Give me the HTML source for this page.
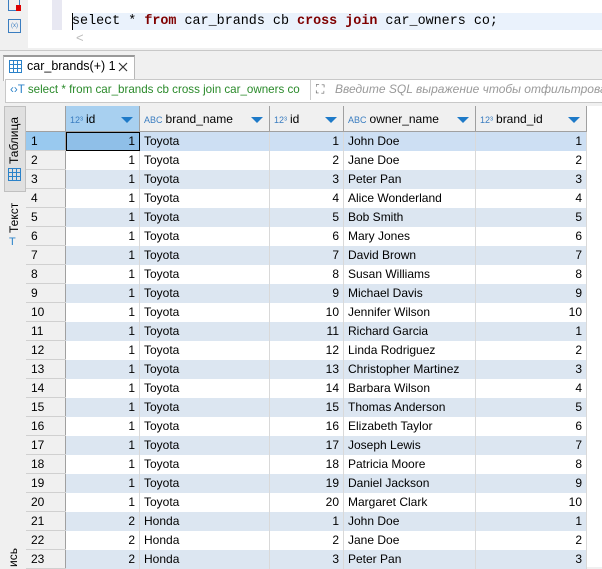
<!DOCTYPE html><html><head><meta charset="utf-8"><style>
body{margin:0;width:602px;height:567px;overflow:hidden;background:#f0f0f0;font-family:"Liberation Sans",sans-serif;position:relative}
.a{position:absolute}
.sql{font-family:"Liberation Mono",monospace;font-size:13.4px}
.kw{color:#7f0000;font-weight:bold}
table{border-collapse:collapse;font-size:12px}
td{height:18px;padding:0 4px;border-right:1px solid #d9d9d9;white-space:nowrap}
tr.o td{background:#dce6f1}
tr.e td{background:#fff}
td.n{background:#f0f0f0!important;border-bottom:1px solid #d0d0d0;border-right:1px solid #a0a0a0;padding-left:5px}
td.r{text-align:right}
th{height:25px;background:#f0f0f0;border-right:1px solid #a0a0a0;border-bottom:1px solid #a0a0a0;font-weight:normal;text-align:left;padding:0 4px;font-size:12px;position:relative}
.tri{position:absolute;right:6px;top:11px;width:0;height:0;border-left:6px solid transparent;border-right:6px solid transparent;border-top:6px solid #1e7ac8}
.ic{font-size:9px;color:#3a7dc0;margin-right:3px}
.grid{position:absolute;width:11px;height:11px;border:1px solid #2b82c9;background:linear-gradient(#2b82c9,#2b82c9) 3px 0/1px 100% no-repeat,linear-gradient(#2b82c9,#2b82c9) 7px 0/1px 100% no-repeat,linear-gradient(#2b82c9,#2b82c9) 0 3px/100% 1px no-repeat,linear-gradient(#2b82c9,#2b82c9) 0 7px/100% 1px no-repeat}
</style></head><body>
<div class="a" style="left:0;top:0;width:602px;height:48px;background:#fff"></div>
<div class="a" style="left:0;top:0;width:28px;height:48px;background:#f0f0f0"></div>
<div class="a" style="left:52px;top:0;width:10px;height:30px;background:#e8e8f2"></div>
<div class="a" style="left:8px;top:0;width:10px;height:10px;border:1px solid #3a7dc0;border-top:none"></div>
<div class="a" style="left:16px;top:5px;width:5px;height:6px;background:#d00"></div>
<div class="a" style="left:8px;top:19px;width:11px;height:12px;border:1px solid #3a7dc0;font-size:6px;color:#3a7dc0;text-align:center;line-height:12px">(x)</div>
<div class="a" style="left:72px;top:13px;width:530px;height:17px;background:#eaf2fc"></div>
<div class="a" style="left:72px;top:13px;width:1px;height:17px;background:#000"></div>
<div class="a sql" style="left:72px;top:14px">select * <span class="kw">from</span> car_brands cb <span class="kw">cross join</span> car_owners co;</div>
<div class="a" style="left:76px;top:30px;color:#bbb;font-size:13px">&lt;</div>
<div class="a" style="left:0;top:50px;width:602px;height:1px;background:#c8c8c8"></div>
<div class="a" style="left:3px;top:55px;width:130px;height:24px;background:#fff;border:1px solid #b8b8b8;border-bottom:none;border-top:2px solid #999"></div>
<div class="grid" style="left:9px;top:60px"></div>
<div class="a" style="left:27px;top:59px;font-size:12.5px">car_brands(+) 1</div>
<svg class="a" style="left:118px;top:62px" width="10" height="10"><path d="M1 1L9 9M9 1L1 9" stroke="#333" stroke-width="1.2"/></svg>
<div class="a" style="left:5px;top:79px;width:597px;height:22px;background:#fff;border:1px solid #c8c8c8"></div>
<div class="a" style="left:10px;top:83px;font-size:11.6px;color:#2a8a2a;white-space:nowrap"><span style="color:#2b82c9">‹›T</span> select * from car_brands cb cross join car_owners co</div>
<div class="a" style="left:310px;top:80px;width:1px;height:20px;background:#ccc"></div>
<div class="a" style="left:316px;top:82px;font-size:12px;color:#666">⛶</div>
<div class="a" style="left:335px;top:82px;font-size:12px;color:#999;font-style:italic;white-space:nowrap">Введите SQL выражение чтобы отфильтроват</div>
<div class="a" style="left:4px;top:106px;width:20px;height:84px;background:#e0e0e0;border:1px solid #c0c0c0"></div>
<div class="a" style="left:7px;top:164px;font-size:12px;transform:rotate(-90deg);transform-origin:0 0;white-space:nowrap">Таблица</div>
<div class="grid" style="left:8px;top:168px"></div>
<div class="a" style="left:7px;top:233px;font-size:12px;transform:rotate(-90deg);transform-origin:0 0;white-space:nowrap">Текст</div>
<div class="a" style="left:9px;top:236px;font-size:11px;color:#2b82c9">T</div>
<div class="a" style="left:6px;top:567px;font-size:12px;transform:rotate(-90deg);transform-origin:0 0;white-space:nowrap">ись</div>
<div class="a" style="left:26px;top:106px;width:576px;height:461px;background:#fff"></div>
<table class="a" style="left:26px;top:106px">
<tr><th style="width:31px;border-right:1px solid #a0a0a0"></th>
<th style="width:65px;background:#a8d0f0"><span class="ic">12³</span>id<span class="tri"></span></th>
<th style="width:121px"><span class="ic">ABC</span>brand_name<span class="tri"></span></th>
<th style="width:65px"><span class="ic">12³</span>id<span class="tri"></span></th>
<th style="width:123px"><span class="ic">ABC</span>owner_name<span class="tri"></span></th>
<th style="width:102px"><span class="ic">12³</span>brand_id<span class="tri"></span></th></tr>
<tbody id="b"></tbody></table>
<script>
var n=["John Doe","Jane Doe","Peter Pan","Alice Wonderland","Bob Smith","Mary Jones","David Brown","Susan Williams","Michael Davis","Jennifer Wilson","Richard Garcia","Linda Rodriguez","Christopher Martinez","Barbara Wilson","Thomas Anderson","Elizabeth Taylor","Joseph Lewis","Patricia Moore","Daniel Jackson","Margaret Clark"];
var bid=[1,2,3,4,5,6,7,8,9,10,1,2,3,4,5,6,7,8,9,10];var h="";
for(var i=0;i<23;i++){var k=i<20?i:i-20,b=i<20?1:2,bn=i<20?"Toyota":"Honda";
var sel=i==0;var cls=i%2==0?"o":"e";
h+='<tr class="'+cls+'"><td class="n" style="'+(sel?'background:#99c9ef!important':'')+'">'+(i+1)+'</td><td class="r" style="'+(sel?'background:#8fbfe8;outline:1px solid #000;outline-offset:-1px':'')+'">'+b+'</td><td'+(sel?' style="background:#cddff3"':'')+'>'+bn+'</td><td class="r"'+(sel?' style="background:#cddff3"':'')+'>'+(k+1)+'</td><td'+(sel?' style="background:#cddff3"':'')+'>'+n[k]+'</td><td class="r"'+(sel?' style="background:#cddff3"':'')+'>'+bid[k]+'</td></tr>';}
document.getElementById("b").innerHTML=h;
</script>
</body></html>
